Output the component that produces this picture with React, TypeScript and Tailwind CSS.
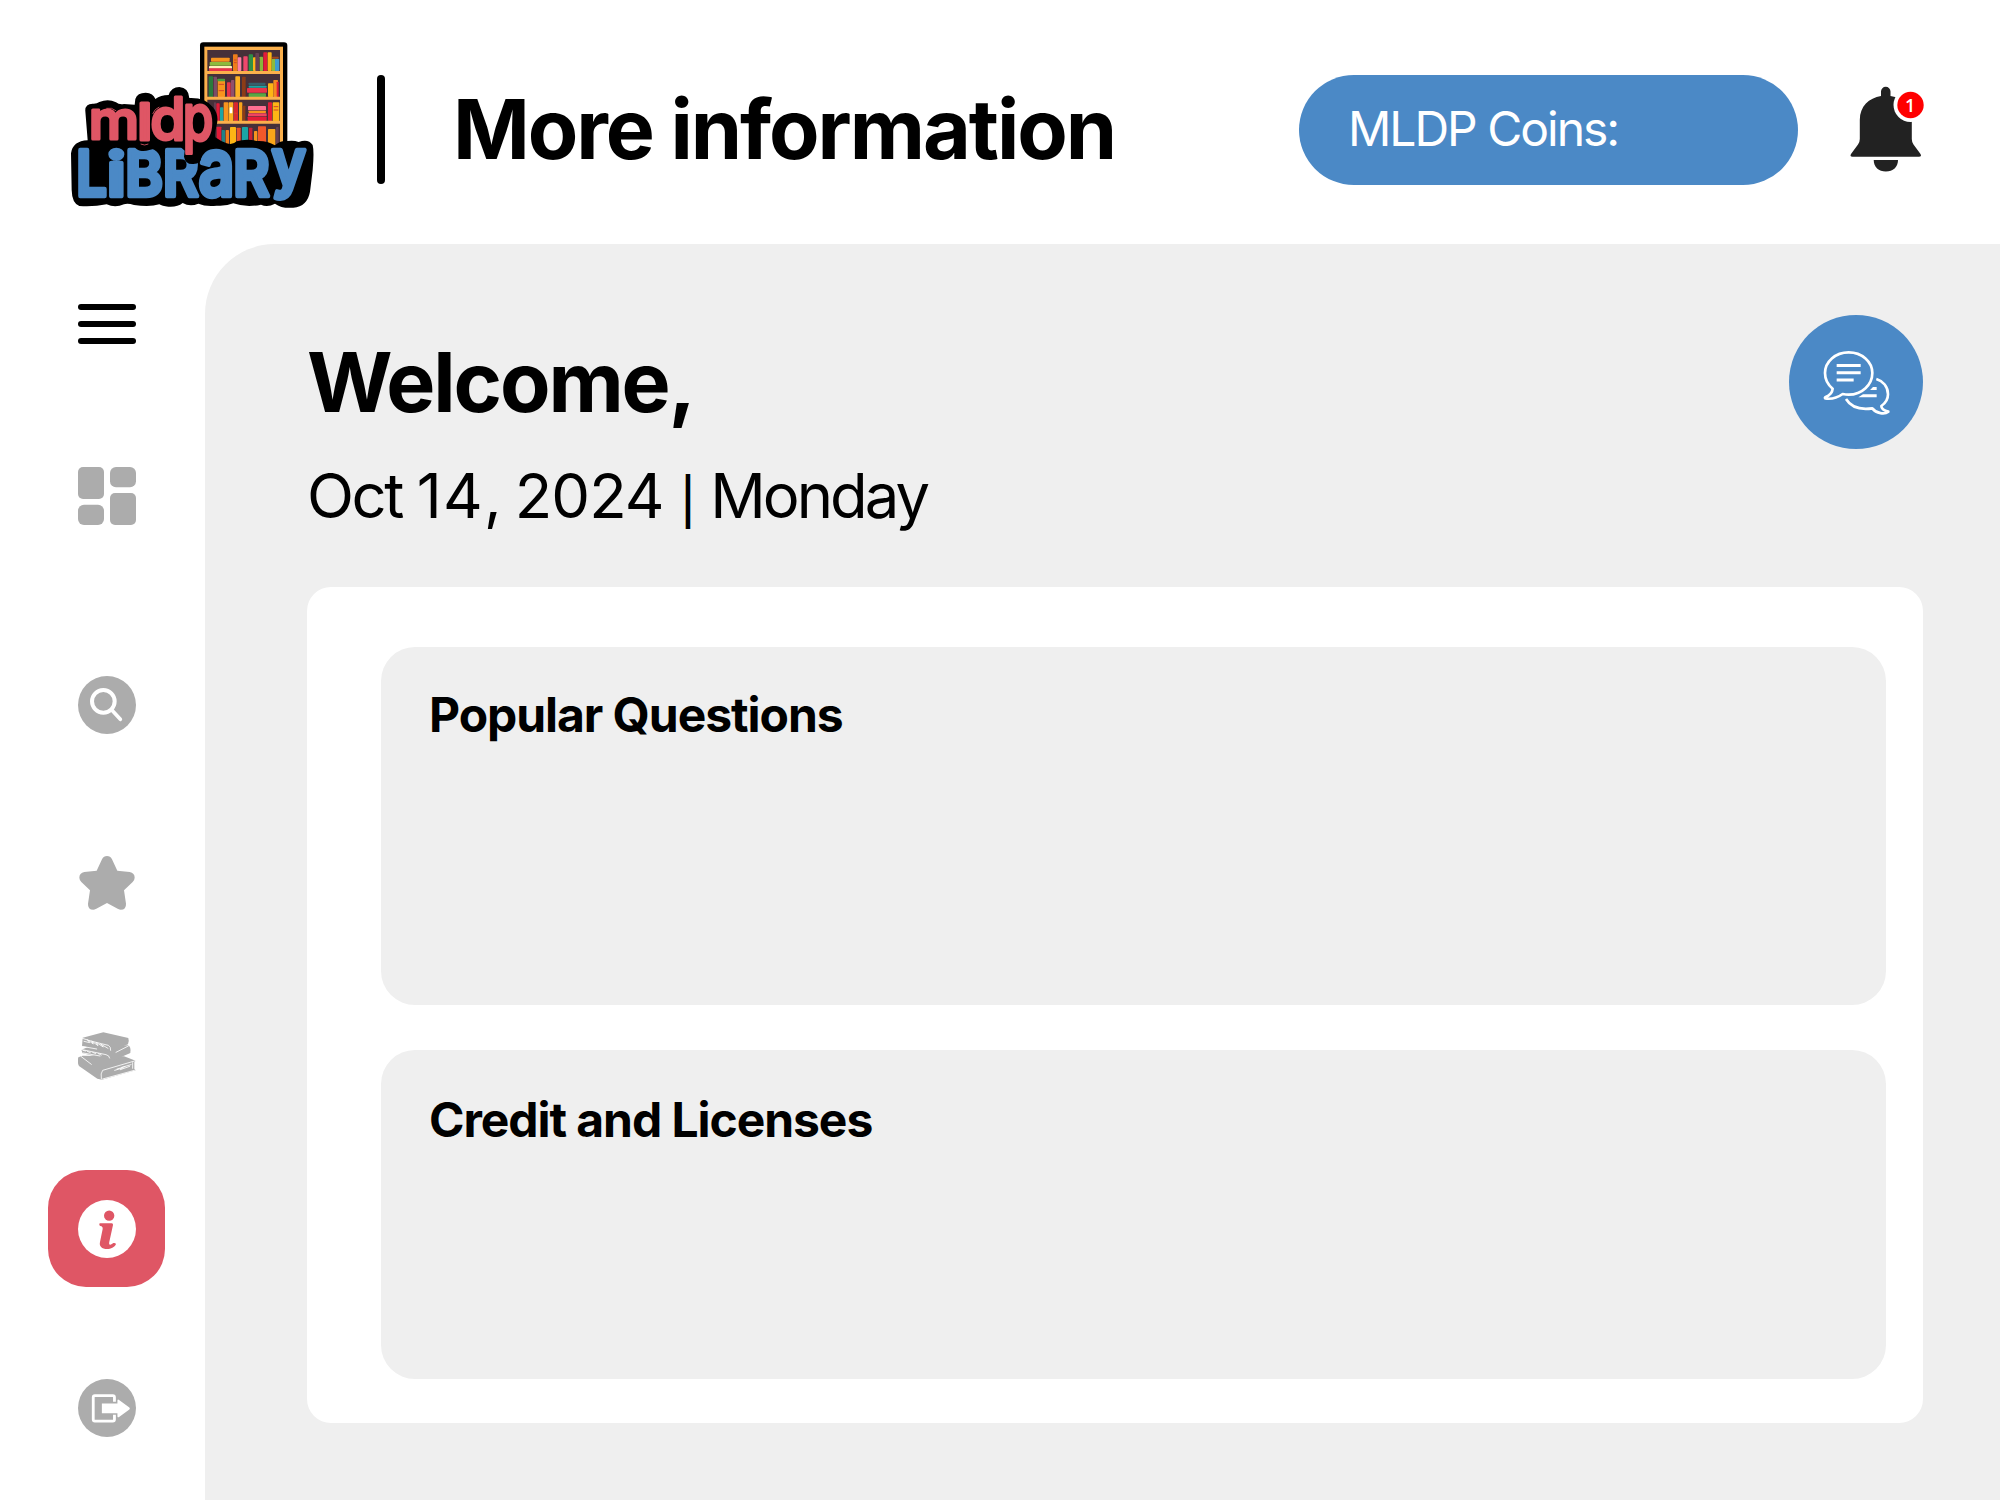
import React from "react";

type Glyph = { ch: string; x: number; y: number; w: number; size: number };

const topWord: Glyph[] = [
  { ch: "m", x: 86, y: 328, w: 151, size: 160 },
  { ch: "l", x: 230, y: 330, w: 48, size: 154 },
  { ch: "d", x: 271, y: 330, w: 106, size: 178 },
  { ch: "p", x: 368, y: 331, w: 92, size: 192 },
];

const bottomWord: Glyph[] = [
  { ch: "L", x: 49, y: 498, w: 92, size: 190 },
  { ch: "i", x: 141, y: 498, w: 56, size: 182 },
  { ch: "B", x: 196, y: 498, w: 113, size: 190 },
  { ch: "R", x: 309, y: 498, w: 107, size: 190 },
  { ch: "a", x: 415, y: 497, w: 109, size: 246 },
  { ch: "R", x: 520, y: 498, w: 109, size: 190 },
  { ch: "y", x: 635, y: 464, w: 102, size: 194 },
];

function Word({ glyphs, color, stroke, className }: { glyphs: Glyph[]; color: string; stroke: number; className: string }) {
  return (
    <g fill={color} stroke={color} strokeWidth={stroke} strokeLinejoin="round" strokeLinecap="round" className={className}>
      {glyphs.map((g, i) => (
        <text key={i} x={g.x} y={g.y} fontSize={g.size} textLength={g.w} lengthAdjust="spacingAndGlyphs">
          {g.ch}
        </text>
      ))}
    </g>
  );
}

// x, y, width, height, fill
const books: [number, number, number, number, string][] = [
  [453, 83, 56, 12, "#f7941e"], [449, 96, 64, 11, "#8dbb3c"], [447, 108, 69, 8, "#fff0b8"], [447, 115, 69, 8, "#e8334a"],
  [519, 73, 14, 50, "#ef7d1a"], [533, 82, 11, 41, "#ff7fa5"], [550, 79, 13, 44, "#f0476b"], [566, 73, 13, 50, "#2f8f46"],
  [579, 82, 10, 41, "#fdb515"], [586, 69, 11, 54, "#654052"], [599, 80, 10, 43, "#86b93b"], [610, 67, 12, 56, "#e31b38"],
  [623, 67, 12, 56, "#fdb515"], [635, 87, 12, 36, "#8dbb3c"], [645, 87, 13, 36, "#3d9bd0"], [636, 80, 20, 6, "#a2491c"],
  [446, 139, 13, 62, "#2b7b3b"], [461, 140, 10, 61, "#7b4c66"], [473, 147, 22, 54, "#f7941e"], [473, 146, 22, 8, "#48a23f"],
  [501, 157, 11, 44, "#e8334a"], [513, 150, 10, 51, "#91506c"], [526, 139, 14, 62, "#fdb022"], [546, 140, 11, 61, "#8c3c17"],
  [566, 158, 50, 8, "#34606c"], [566, 167, 54, 6, "#1ba5a5"], [561, 174, 60, 14, "#e8334a"], [566, 190, 52, 11, "#57a843"],
  [624, 160, 16, 41, "#fdb515"], [640, 150, 14, 51, "#f58a1f"], [650, 155, 6, 46, "#e31b38"],
  [462, 217, 6, 56, "#654052"], [469, 220, 10, 53, "#e31b38"], [480, 232, 10, 41, "#1ba5a5"], [491, 217, 14, 56, "#f7941e"],
  [506, 217, 14, 56, "#fdb022"], [509, 232, 8, 18, "#ffffff"], [521, 217, 13, 56, "#d9272e"], [537, 217, 10, 56, "#f9a51a"], [548, 227, 8, 46, "#8c3c17"],
  [564, 228, 54, 13, "#ff6f91"], [566, 242, 52, 7, "#f7941e"], [564, 250, 56, 9, "#f04460"], [563, 260, 57, 13, "#e31b38"],
  [624, 217, 12, 56, "#e31b38"], [638, 217, 20, 56, "#fdb515"],
  [470, 290, 14, 60, "#e31b38"], [485, 300, 10, 50, "#1f8187"], [497, 300, 10, 50, "#ef7d1a"], [510, 291, 18, 60, "#fdb515"],
  [530, 293, 12, 60, "#e8542c"], [546, 291, 18, 60, "#1ba5a5"], [567, 293, 10, 60, "#c91f34"], [582, 303, 10, 50, "#f7941e"],
  [594, 289, 24, 60, "#f2592a"], [624, 297, 22, 50, "#f9a51a"], [648, 291, 8, 60, "#654052"],
];

function Logo() {
  return (
    <svg viewBox="0 0 810 570" className="h-[190px] w-[270px]" role="img" aria-label="mldp Library">
      <rect x="420" y="37" width="262" height="330" rx="10" fill="#000" />
      <rect x="433" y="50" width="236" height="300" fill="#fbb04c" />
      <rect x="442" y="60" width="218" height="290" fill="#463039" />
      {books.map(([x, y, w, h, c], i) => (
        <rect key={i} x={x} y={y} width={w} height={h} rx="2" fill={c} />
      ))}
      <path d="M476 163h16M522 90h8M522 98h8M476 182h16M523 250h9M641 230h14M641 240h14" stroke="#d2442a" strokeWidth="3" />
      <path d="M438 127.500h226M438 205h226M438 277h226" stroke="#fbb04c" strokeWidth="9" />
      <path d="M83 331L76 244Q74 222 98 221Q110 222 118 216Q145 205 168 217Q178 225 192 222L224 224 226 207Q232 188 257 188Q280 189 286 207Q302 195 326 195Q334 171 358 171Q386 173 388 204Q436 202 459 232Q478 255 470 285Q464 308 466 322Q482 334 500 340Q518 346 530 334Q560 325 590 333Q620 331 645 346Q660 331 682 333Q702 330 716 336Q745 325 758 345Q763 365 758 420L750 485Q742 529 700 533Q665 536 645 521Q622 534 603 524Q560 534 520 520Q500 529 470 527Q438 531 415 521Q390 532 368 519Q352 532 325 530Q306 528 298 523Q270 532 222 525Q202 518 192 523Q165 535 140 523Q100 531 58 528Q36 520 35 480L33 370Q38 333 83 331Z" fill="#000" />
      <Word glyphs={bottomWord} color="#4b89c6" stroke={14} className="font-['Inter',sans-serif] font-semibold" />
      <path d="M218 342C232 372 262 364 286 354L352 342 374 362 372 380Q376 404 400 402T424 380L430 340Z" fill="#000" />
      <Word glyphs={topWord} color="#df5665" stroke={9} className="font-['Inter',sans-serif] font-medium" />
      <path d="M139 235q16-4 30 8M278 252q6-16 20-21M242 342q12 6 23 0M420 334q17-2 24-15" fill="none" stroke="#df5665" strokeWidth="2.500" />
    </svg>
  );
}

function BellIcon() {
  return (
    <svg viewBox="0 0 80 90" className="h-[90px] w-20">
      <path d="M33 12V7.500a4.750 4.750 0 0 1 9.500 0V12C55 14 63.800 22 63.800 36V55Q63.800 58 65.500 60.500L72.500 70Q74 72.800 71 72.800H4.500Q1.500 72.800 3 70L10 60.500Q11.800 58 11.800 55V36C11.800 22 21 14 33 12Z" fill="#222" />
      <path d="M25.700 76H50C50 83 45 87.500 37.850 87.500S25.700 83 25.700 76Z" fill="#222" />
      <circle cx="62.500" cy="21" r="17" fill="#fff" />
      <circle cx="62.500" cy="21" r="13.200" fill="#f00" />
      <text x="62.200" y="27.600" textAnchor="middle" fontSize="18" fill="#fff" className="font-['Open_Sans',sans-serif] font-semibold">1</text>
    </svg>
  );
}

function ChatIcon() {
  return (
    <svg viewBox="58 45 402 402" className="size-[134px]" fill="none" stroke="#fff" strokeWidth="8" strokeLinejoin="round">
      <path d="M189 266C172 252 166 236 166 219C166 185 197 157 237 157C277 157 308 185 308 219C308 254 277 284 237 284Q228 284 219 282C205 292 185 298 167 295.500Q164 293 168 291C181 286 188 278 189 266Z" />
      <path d="M320 237C340 243 355 260 355 283C355 298 347 310 335 318C335 326 344 332 356 335C345 344 320 341 308 325C280 329 246 325 229 297" />
      <path d="M201 196.500h72M201 218h72M201 240h51" strokeWidth="9" />
      <path d="M310 261h11v9h-20ZM280 283h41v9h-55Z" fill="#fff" stroke="none" />
    </svg>
  );
}

function MenuIcon() {
  return (
    <div className="flex h-10 w-[58px] flex-col justify-between">
      <span className="h-1.5 rounded-full bg-black" />
      <span className="h-1.5 rounded-full bg-black" />
      <span className="h-1.5 rounded-full bg-black" />
    </div>
  );
}

function DashboardIcon() {
  return (
    <svg viewBox="0 0 58 58" className="size-[58px]" fill="#acacac">
      <rect width="26" height="32" rx="5" />
      <rect x="32" width="26" height="20.300" rx="6" />
      <rect y="37.700" width="26" height="20.300" rx="6" />
      <rect x="32" y="26" width="26" height="32" rx="5" />
    </svg>
  );
}

function SearchIcon() {
  return (
    <svg viewBox="114 78 174 174" className="size-[58px]" fill="none" stroke="#fff">
      <circle cx="201" cy="165" r="87" fill="#acacac" stroke="none" />
      <circle cx="190" cy="154" r="34" strokeWidth="12" />
      <path d="M216 181 241 208" strokeWidth="11" strokeLinecap="round" />
    </svg>
  );
}

function StarIcon() {
  return (
    <svg viewBox="114 612 174 174" className="size-[58px]" fill="#acacac">
      <path d="M170 662 186 628Q191 618 201 618T216 628L232 662 269 666Q284 669 284 683Q284 689 278 696L252 721 258 761Q259 779 242 779Q239 779 233 776L201 759 169 776Q163 779 160 779Q143 779 144 761L150 721 124 696Q118 689 118 683Q118 669 133 666Z" />
    </svg>
  );
}

function BooksIcon() {
  return (
    <svg viewBox="114 62 174 150" className="h-[50px] w-[58px]">
      <g fill="#acacac">
        <path d="M115 141 128 136 252 138 287 151 283 156 283 176 287 180 186 208 172 205 117 167 Q111 156 115 141Z" />
        <path d="M124 118 150 108 264 105Q274 110 271 128L228 147 200 146 128 129Z" />
        <path d="M128 82 190 66 265 83Q268 92 264 102L214 122 126 108Z" />
      </g>
      <g fill="none" stroke="#fff" strokeWidth="2.500" strokeLinecap="round" strokeLinejoin="round">
        <path d="M127 84C150 92 180 99 205 105Q213 109 212 120" />
        <path d="M132 93 149 97 142 88 160 101 155 92 174 106 168 96 190 110 182 101 204 114M126 108 170 116" />
        <path d="M122 117 198 133Q208 135 209 143M130 128 180 137M137 122l-8-2M151 127l-9-4M167 130l-9-4M184 134l-9-4M228 126 265 107" />
        <path d="M124 139 154 162M184 206Q181 188 188 180L287 151M188 206 283 180M224 180l24-7M231 176l24-7M241 178l28-10M245 171l28-8M278 157v17" />
      </g>
    </svg>
  );
}

function InfoIcon() {
  return (
    <svg viewBox="114 570 174 174" className="size-[58px]">
      <circle cx="201" cy="657" r="87" fill="#fff" />
      <circle cx="207.500" cy="617" r="15.500" fill="#df5665" />
      <path d="M180 640H215Q220 640 219 645L208 695Q206 705 211 704Q216 703 220 699Q226 698 228 702C224 712 212 717 202 717C185 717 177 709 180 696L188 657Q189 649 181 648Q177 647 178 643Q178 640 180 640Z" fill="#df5665" />
    </svg>
  );
}

function ExitIcon() {
  return (
    <svg viewBox="53 57 175 175" className="size-[58px]">
      <circle cx="140.500" cy="144.500" r="87.500" fill="#acacac" />
      <path d="M163 126V112Q163 107 158 107H104Q99 107 99 112V179Q99 184 104 184H158Q163 184 163 179V165" fill="none" stroke="#fff" strokeWidth="8.500" />
      <path d="M125 131H172V121Q173 117 177 120L208 143Q211 146 208 149L177 172Q173 174 172 170V160H125Z" fill="#fff" />
    </svg>
  );
}

function TopicCard({ title, className }: { title: string; className: string }) {
  return (
    <section className={`rounded-[34px] bg-[#efefef] pl-12 ${className}`}>
      <h3 className="text-[48px] leading-[60px] font-bold tracking-[-0.022em]">{title}</h3>
    </section>
  );
}

export default function App() {
  return (
    <div className="flex h-[1500px] w-[2000px] flex-col overflow-hidden bg-white font-['Inter',sans-serif] text-black">
      <header className="flex h-[243.5px] shrink-0 items-start pl-[60px]">
        <div className="mt-[30px]"><Logo /></div>
        <div className="mt-[75px] ml-[47px] h-[109px] w-2 rounded-full bg-black" />
        <h1 className="mt-[79px] ml-[68px] w-[846px] text-[82.500px] leading-[100px] font-bold tracking-[-0.025em] whitespace-nowrap">More information</h1>
        <div className="mt-[75px] flex h-[109.5px] w-[499px] items-center rounded-full bg-[#4b89c6] pl-[49px] text-white">
          <span className="-mt-0.5 text-[48px] leading-[60px] tracking-[-0.042em] whitespace-nowrap">MLDP Coins:</span>
        </div>
        <div className="mt-[84px] ml-[50px]"><BellIcon /></div>
      </header>

      <div className="flex min-h-0 flex-1">
        <nav className="flex w-[205.4px] shrink-0 flex-col items-start pl-[78px]">
          <div className="mt-[60.5px]"><MenuIcon /></div>
          <div className="mt-[123px]"><DashboardIcon /></div>
          <div className="mt-[151px]"><SearchIcon /></div>
          <div className="mt-[120px]"><StarIcon /></div>
          <div className="mt-[119px]"><BooksIcon /></div>
          <div className="mt-[89px] -ml-[30px] flex size-[117px] items-center justify-center rounded-[38px] bg-[#df5665]"><InfoIcon /></div>
          <div className="mt-[92px]"><ExitIcon /></div>
        </nav>

        <main className="flex-1 rounded-tl-[70px] bg-[#efefef] pt-[71.8px] pr-[76.7px] pl-[101.6px]">
          <div className="flex h-[271.7px] items-start justify-between">
            <div>
              <h2 className="mt-[16.5px] text-[82.500px] leading-[100px] font-bold tracking-[-0.026em]">Welcome,</h2>
              <p className="mt-[24px] text-[61.500px] leading-[80px] whitespace-nowrap">
                <span className="tracking-[-0.04em]">Oct </span>
                <span className="tracking-[0.02em]">14</span>
                <span className="tracking-[-0.035em]">, </span>
                <span className="tracking-[-0.015em]">2024 </span>
                <span className="text-[46px] leading-none font-medium">|</span>
                <span className="tracking-[-0.048em]"> Monday</span>
              </p>
            </div>
            <button className="size-[134px] rounded-full bg-[#4b89c6]"><ChatIcon /></button>
          </div>
          <div className="flex h-[836px] flex-col gap-[45px] rounded-3xl bg-white pt-[60px] pr-[37px] pl-[74px]">
            <TopicCard title="Popular Questions" className="h-[358px] pt-[38px]" />
            <TopicCard title="Credit and Licenses" className="h-[329px] pt-[40px]" />
          </div>
        </main>
      </div>
    </div>
  );
}
